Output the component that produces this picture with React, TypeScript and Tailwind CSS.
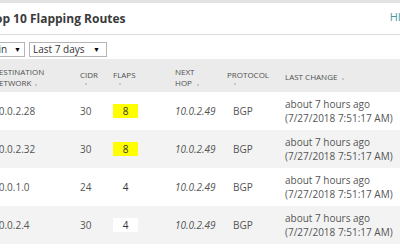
import React from 'react';

interface RouteRow {
  network: string;
  cidr: number;
  flaps: number;
  nextHop: string;
  protocol: string;
  highlight: 'yellow' | 'white' | 'none';
}

const rows: RouteRow[] = [
  { network: '10.0.2.28', cidr: 30, flaps: 8, nextHop: '10.0.2.49', protocol: 'BGP', highlight: 'yellow' },
  { network: '10.0.2.32', cidr: 30, flaps: 8, nextHop: '10.0.2.49', protocol: 'BGP', highlight: 'yellow' },
  { network: '10.0.1.0', cidr: 24, flaps: 4, nextHop: '10.0.2.49', protocol: 'BGP', highlight: 'none' },
  { network: '10.0.2.4', cidr: 30, flaps: 4, nextHop: '10.0.2.49', protocol: 'BGP', highlight: 'white' },
];

const cols = 'grid grid-cols-[87px_33px_62px_52px_58px_1fr]';

const SortDot = ({ className = '' }: { className?: string }) => (
  <span className={`inline-block w-[2px] h-[2px] bg-[#c8c8c8] ${className}`} />
);

export default function App() {
  return (
    <div className="w-[400px] h-[250px] overflow-hidden bg-white text-[#555] font-['Open_Sans',sans-serif]">
      {/* top strip */}
      <div className="h-[3px] bg-[#e2e2e2]" />

      {/* title */}
      <div className="h-[32px] border-b border-[#dcdcdc] flex items-center justify-between">
        <h2 className="-ml-[12px] text-[12px] font-bold text-[#3a3a3a] whitespace-nowrap">Top 10 Flapping Routes</h2>
        <span className="text-[11px] text-[#4a97a3] -mr-[15px] mb-[3px] whitespace-nowrap">HIDE</span>
      </div>

      {/* filters */}
      <div className="h-[24px] flex items-center gap-[4px] -ml-[20px] pt-[4px]">
        <div className="h-[15px] w-[45px] border border-[#b5b5b5] bg-white flex items-center justify-between px-[3px] text-[10px] text-[#333]">
          <span className="leading-none">Main</span>
          <span className="text-[7px] leading-none text-black">▼</span>
        </div>
        <div className="h-[15px] w-[78px] border border-[#b5b5b5] bg-white flex items-center justify-between pl-[3px] pr-[6px] text-[10px] text-[#333]">
          <span className="leading-none">Last 7 days</span>
          <span className="text-[7px] leading-none text-black">▼</span>
        </div>
      </div>

      {/* table */}
      <div className="-ml-[7px] w-[407px]">
        <div className={`${cols} h-[33px] bg-[#ebebeb] items-center text-[8px] leading-[11px] uppercase text-[#4f4f4f]`}>
          <div className="pt-[2px]">
            <div>Destination</div>
            <div>Network <SortDot className="ml-[2px]" /></div>
          </div>
          <div className="flex flex-col items-start pt-[2px]">
            <span>CIDR</span>
            <SortDot className="ml-[5px] mt-[3px]" />
          </div>
          <div className="flex flex-col items-start pt-[2px]">
            <span>Flaps</span>
            <SortDot className="ml-[6px] mt-[3px]" />
          </div>
          <div className="pt-[2px]">
            <div>Next</div>
            <div>Hop <SortDot className="ml-[3px]" /></div>
          </div>
          <div className="flex flex-col items-start pt-[2px]">
            <span>Protocol</span>
            <SortDot className="ml-[7px] mt-[3px]" />
          </div>
          <div className="pt-[2px]">
            Last Change <SortDot className="ml-[3px]" />
          </div>
        </div>

        {rows.map((r, i) => (
          <div
            key={i}
            className={`${cols} h-[38px] items-center text-[10px] ${i % 2 === 1 ? 'bg-[#f3f3f3]' : 'bg-white'}`}
          >
            <div>{r.network}</div>
            <div>{r.cidr}</div>
            <div>
              <span
                className={`inline-flex w-[25px] h-[14px] items-center justify-center text-[#333] ${
                  r.highlight === 'yellow' ? 'bg-[#ffff00]' : r.highlight === 'white' ? 'bg-white' : ''
                }`}
              >
                {r.flaps}
              </span>
            </div>
            <div className="italic">{r.nextHop}</div>
            <div className="pl-[6px]">{r.protocol}</div>
            <div className="leading-[14px] whitespace-nowrap">
              <div>about 7 hours ago</div>
              <div>(7/27/2018 7:51:17 AM)</div>
            </div>
          </div>
        ))}
      </div>
    </div>
  );
}
